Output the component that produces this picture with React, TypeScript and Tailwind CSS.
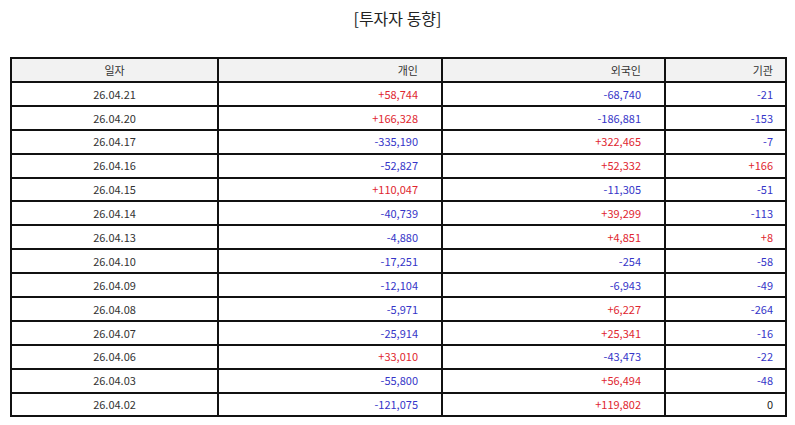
const rows: [string, string, string, string][] = [
  ["26.04.21", "+58,744", "-68,740", "-21"],
  ["26.04.20", "+166,328", "-186,881", "-153"],
  ["26.04.17", "-335,190", "+322,465", "-7"],
  ["26.04.16", "-52,827", "+52,332", "+166"],
  ["26.04.15", "+110,047", "-11,305", "-51"],
  ["26.04.14", "-40,739", "+39,299", "-113"],
  ["26.04.13", "-4,880", "+4,851", "+8"],
  ["26.04.10", "-17,251", "-254", "-58"],
  ["26.04.09", "-12,104", "-6,943", "-49"],
  ["26.04.08", "-5,971", "+6,227", "-264"],
  ["26.04.07", "-25,914", "+25,341", "-16"],
  ["26.04.06", "+33,010", "-43,473", "-22"],
  ["26.04.03", "-55,800", "+56,494", "-48"],
  ["26.04.02", "-121,075", "+119,802", "0"],
];

function tone(v: string) {
  if (v.startsWith("+")) return "text-[#e0262f]";
  if (v.startsWith("-")) return "text-[#3535c8]";
  return "text-[#222]";
}

export default function App() {
  return (
    <div
      className="w-[795px] h-[425px] bg-white px-[10px] pt-[6px]"
      style={{ fontFamily: '"Noto Sans CJK KR", "Noto Sans", sans-serif' }}
    >
      <h1 className="text-center text-[16px] leading-[24px] text-[#222] mb-[27px]">
        [투자자 동향]
      </h1>
      <table className="w-[775px] table-fixed border-collapse text-[11px] text-[#333]">
        <colgroup>
          <col className="w-[207px]" />
          <col className="w-[224px]" />
          <col className="w-[223px]" />
          <col className="w-[121px]" />
        </colgroup>
        <thead>
          <tr className="h-[24px] bg-[#f2f2f2]">
            <th className="border-2 border-[#111] font-normal text-center">일자</th>
            <th className="border-2 border-[#111] font-normal text-right pr-[23px]">개인</th>
            <th className="border-2 border-[#111] font-normal text-right pr-[23px]">외국인</th>
            <th className="border-2 border-[#111] font-normal text-right pr-[12px]">기관</th>
          </tr>
        </thead>
        <tbody>
          {rows.map(([d, a, b, c]) => (
            <tr key={d} className="h-[23.9px]">
              <td className="border-2 border-[#111] text-center">{d}</td>
              <td className={`border-2 border-[#111] text-right pr-[23px] ${tone(a)}`}>{a}</td>
              <td className={`border-2 border-[#111] text-right pr-[23px] ${tone(b)}`}>{b}</td>
              <td className={`border-2 border-[#111] text-right pr-[12px] ${tone(c)}`}>{c}</td>
            </tr>
          ))}
        </tbody>
      </table>
    </div>
  );
}
